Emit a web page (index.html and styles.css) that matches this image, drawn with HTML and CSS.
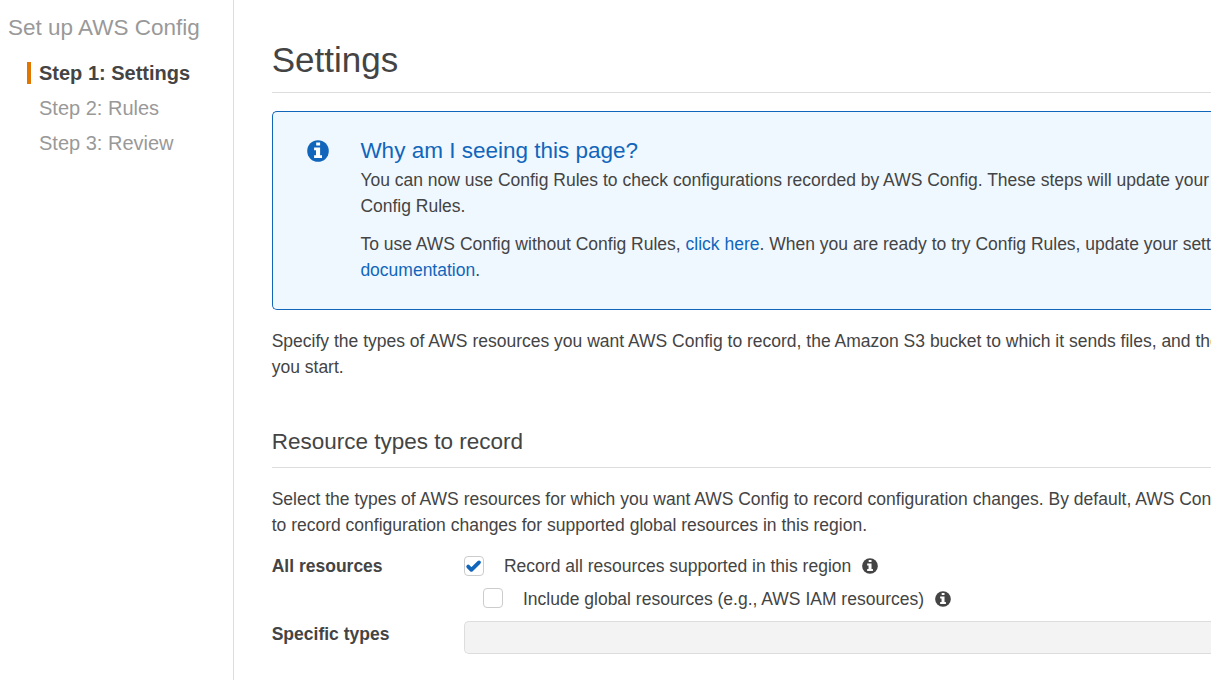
FILE: index.html
```html
<!DOCTYPE html>
<html lang="en">
<head>
  <meta charset="UTF-8" />
  <meta name="viewport" content="width=device-width, initial-scale=1.0"/>
  <title>AWS Config - Settings</title>
  <link rel="stylesheet" href="styles.css">
</head>
<body>
  <svg class="defs" width="0" height="0">
    <symbol id="info" viewBox="0 0 22 22">
      <circle cx="11" cy="11" r="10.8" fill="currentColor"/>
      <path class="glyph" d="M9.2 2.6h3.9v3H9.2zM7.1 7.4h6v7.8h1.9v2.8H7.1v-2.8H9v-5H7.1z"/>
    </symbol>
  </svg>

  <div class="wizard">
    <nav class="sidebar">
      <h2>Set up AWS Config</h2>
      <ul class="steps">
        <li class="active">Step 1: Settings</li>
        <li>Step 2: Rules</li>
        <li>Step 3: Review</li>
      </ul>
    </nav>

    <main class="content">
      <h1>Settings</h1>

      <div class="notice">
        <svg class="notice-icon"><use href="#info"/></svg>
        <div class="notice-body">
          <h3>Why am I seeing this page?</h3>
          <p>You can now use Config Rules to check configurations recorded by AWS Config. These steps will update your<br>Config Rules.</p>
          <p>To use AWS Config without Config Rules, <a href="#">click here</a>. When you are ready to try Config Rules, update your sett<br><a href="#">documentation</a>.</p>
        </div>
      </div>

      <p class="intro">Specify the types of AWS resources you want AWS Config to record, the Amazon S3 bucket to which it sends files, and the<br>you start.</p>

      <h2 class="section-title">Resource types to record</h2>
      <p class="section-text">Select the types of AWS resources for which you want AWS Config to record configuration changes. By default, AWS Con<br>to record configuration changes for supported global resources in this region.</p>

      <form class="form">
        <div class="label">All resources</div>
        <div class="options">
          <label class="option">
            <input type="checkbox" checked>
            <span>Record all resources supported in this region</span>
            <svg class="info-icon"><use href="#info"/></svg>
          </label>
          <label class="option nested">
            <input type="checkbox">
            <span>Include global resources (e.g., AWS IAM resources)</span>
            <svg class="info-icon"><use href="#info"/></svg>
          </label>
        </div>
        <div class="label">Specific types</div>
        <input class="types" type="text" aria-label="Specific types" disabled>
      </form>
    </main>
  </div>
</body>
</html>
```
FILE: styles.css
```css
* {
  box-sizing: border-box;
}
body {
  margin: 0;
  font-family: "Liberation Sans", Arial, sans-serif;
  font-size: 17.5px;
  line-height: 26px;
  color: #444;
  background: #fff;
  overflow: hidden;
}
h1, h2, h3, p, ul {
  margin: 0;
  padding: 0;
  font-weight: normal;
}
a {
  color: #1166bb;
  text-decoration: none;
}
.defs {
  display: block;
}
.glyph {
  fill: #fff;
}
.wizard {
  display: flex;
  height: 680px;
}
.sidebar {
  flex: 0 0 234px;
  padding: 12px 0 0 8px;
  border-right: 1px solid #ddd;
  color: #999;
}
.sidebar h2 {
  font-size: 22.5px;
  line-height: 32px;
}
.steps {
  margin: 18px 0 0 19px;
  list-style: none;
  font-size: 20px;
  line-height: 22px;
}
.steps li {
  margin-bottom: 13px;
  padding-left: 8px;
  border-left: 4px solid transparent;
}
.steps .active {
  border-left-color: #e07700;
  color: #444;
  font-weight: bold;
}
.content {
  flex: 1;
  min-width: 0;
  padding: 38px 0 0 37.7px;
  white-space: nowrap;
  overflow: hidden;
}
h1 {
  height: 55px;
  border-bottom: 1px solid #ddd;
  font-size: 35px;
  line-height: 44px;
}
.notice {
  display: flex;
  height: 199px;
  margin-top: 18px;
  padding: 24px 0 0 34.3px;
  border: 1px solid #1166bb;
  border-right: none;
  border-radius: 5px 0 0 5px;
  background: #f0f8ff;
}
.notice-icon {
  flex: none;
  width: 22px;
  height: 22px;
  margin: 4px 31.4px 0 0;
  color: #1166bb;
}
.notice h3 {
  margin-bottom: 2px;
  font-size: 22.5px;
  line-height: 29px;
  color: #1166bb;
}
.notice p + p {
  margin-top: 12px;
}
.intro {
  margin-top: 18px;
}
.section-title {
  height: 43px;
  margin-top: 45px;
  border-bottom: 1px solid #ddd;
  font-size: 22.5px;
  line-height: 33px;
}
.section-text {
  margin-top: 18px;
}
.form {
  display: grid;
  grid-template-columns: 192.3px 1fr;
  margin-top: 15px;
}
.label {
  font-weight: bold;
}
.option {
  display: flex;
  align-items: center;
  height: 26px;
  margin-bottom: 7px;
}
.option.nested {
  margin-left: 19px;
  margin-bottom: 9px;
}
.option input {
  appearance: none;
  width: 20px;
  height: 20px;
  margin: 0 20px 0 0;
  border: 1px solid #ccc;
  border-radius: 4px;
  background: #fff;
}
.option.nested input {
  margin-bottom: 2px;
}
.option input:checked {
  background: url("data:image/svg+xml,%3Csvg xmlns='http://www.w3.org/2000/svg' viewBox='0 0 18 18'%3E%3Cpath d='M3.2 9.6l3.2 3.2 7.6-7.4' fill='none' stroke='%231166bb' stroke-width='3.8' stroke-linejoin='round' stroke-linecap='round'/%3E%3C/svg%3E") center / 18px no-repeat;
}
.info-icon {
  width: 16px;
  height: 16px;
  margin-left: 11px;
}
.types {
  height: 33px;
  min-width: 0;
  border: 1px solid #ddd;
  border-right: none;
  border-radius: 5px 0 0 5px;
  background: #f3f3f3;
}
```
